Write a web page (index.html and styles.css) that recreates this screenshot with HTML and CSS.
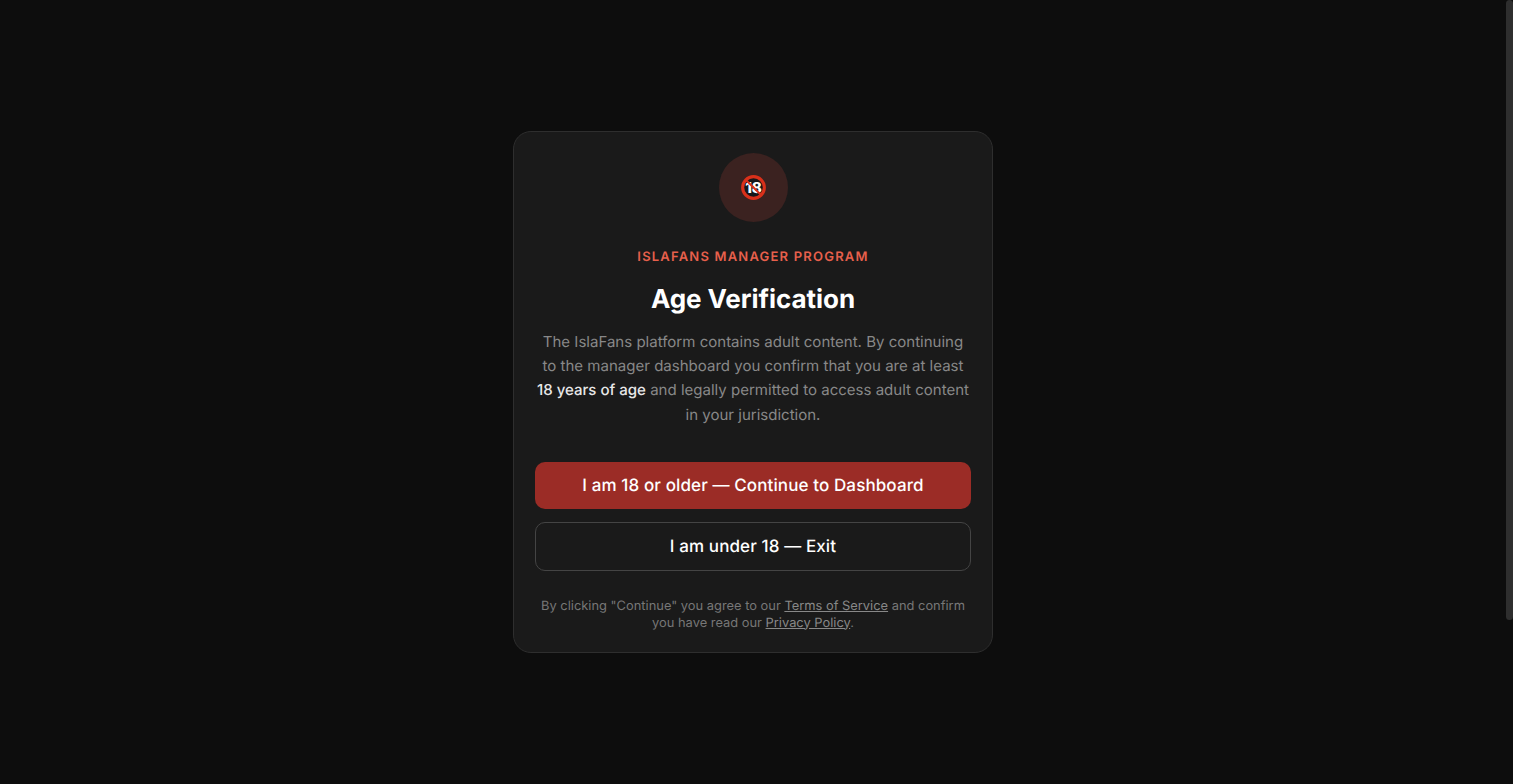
FILE: index.html
```html
<!DOCTYPE html>
<html lang="en">
<head>
<meta charset="utf-8">
<title>Age Verification</title>
<link rel="stylesheet" href="styles.css">
</head>
<body>
<div class="overlay">
  <div class="card">
    <div class="badge">
      <svg class="no18" viewBox="0 0 24 24" width="25" height="25" aria-hidden="true">
        <circle cx="12" cy="12" r="10.4" fill="#15181a" stroke="#d9301a" stroke-width="3"/>
        <text class="no18-text" x="12" y="17.2" text-anchor="middle">18</text>
        <path d="M4.5 4.5 19.5 19.5" stroke="#d9301a" stroke-width="2"/>
      </svg>
    </div>
    <p class="eyebrow">ISLAFANS MANAGER PROGRAM</p>
    <h1 class="title">Age Verification</h1>
    <p class="desc">The IslaFans platform contains adult content. By continuing to the manager dashboard you confirm that you are at least <strong>18 years of age</strong> and legally permitted to access adult content in your jurisdiction.</p>
    <div class="actions">
      <button class="btn btn-primary" type="button">I am 18 or older — Continue to Dashboard</button>
      <button class="btn btn-secondary" type="button">I am under 18 — Exit</button>
    </div>
    <p class="legal">By clicking "Continue" you agree to our <a href="#">Terms of Service</a> and confirm you have read our <a href="#">Privacy Policy</a>.</p>
  </div>
</div>
<div class="scroll-thumb"></div>
</body>
</html>
```
FILE: styles.css
```css
* { box-sizing: border-box; }
html { background: #0d0d0d; }
body {
  margin: 0;
  background: #0d0d0d;
  font-family: Inter, "Liberation Sans", sans-serif;
  color: #fff;
  text-rendering: geometricPrecision;
}
.overlay {
  position: fixed;
  top: 0;
  left: 0;
  right: 7px;
  bottom: 0;
  display: flex;
  align-items: center;
  justify-content: center;
}
.scroll-thumb {
  position: fixed;
  top: 0;
  right: 0;
  width: 7px;
  height: 620px;
  background: #2e2e2e;
  border-radius: 4px;
}
.card {
  width: 480px;
  padding: 21px 21px 20.5px;
  background: #1a1a1a;
  border: 1px solid #2e2e2e;
  border-radius: 18px;
  text-align: center;
}
.badge {
  width: 69px;
  height: 69px;
  margin: 0 auto 27px;
  border-radius: 50%;
  background: #3b2220;
  display: flex;
  align-items: center;
  justify-content: center;
}
.no18 { display: block; margin: -1px 0 0 1px; }
.no18-text { font-family: Inter, sans-serif; font-size: 14.5px; font-weight: 800; fill: #fff; }
.eyebrow {
  margin: 0 0 19px;
  font-size: 13px;
  line-height: 16px;
  font-weight: 600;
  letter-spacing: 1.2px;
  color: #e8604c;
}
.title {
  margin: 0 0 14px;
  font-size: 26px;
  line-height: 32px;
  font-weight: 650;
  letter-spacing: -0.05px;
  color: #fff;
}
.desc {
  margin: 0 0 35.2px;
  font-size: 15.04px;
  line-height: 24.2px;
  color: #888;
}
.desc strong { font-weight: 500; color: #e8e8e8; }
.actions { display: flex; flex-direction: column; gap: 13px; }
.btn {
  display: block;
  width: 100%;
  padding: 2px 0 0;
  font-family: inherit;
  font-size: 17px;
  line-height: 21px;
  font-weight: 550;
  letter-spacing: 0.11px;
  color: #fff;
  border-radius: 10px;
  cursor: pointer;
  text-rendering: geometricPrecision;
}
.btn-primary { height: 47px; background: #9b2c26; border: 0; }
.btn-secondary { height: 49px; background: transparent; border: 1px solid #444; }
.legal {
  margin: 26.5px 0 0;
  font-size: 12.88px;
  line-height: 17px;
  color: #777;
}
.legal a { color: #888; text-decoration: underline; }
```
